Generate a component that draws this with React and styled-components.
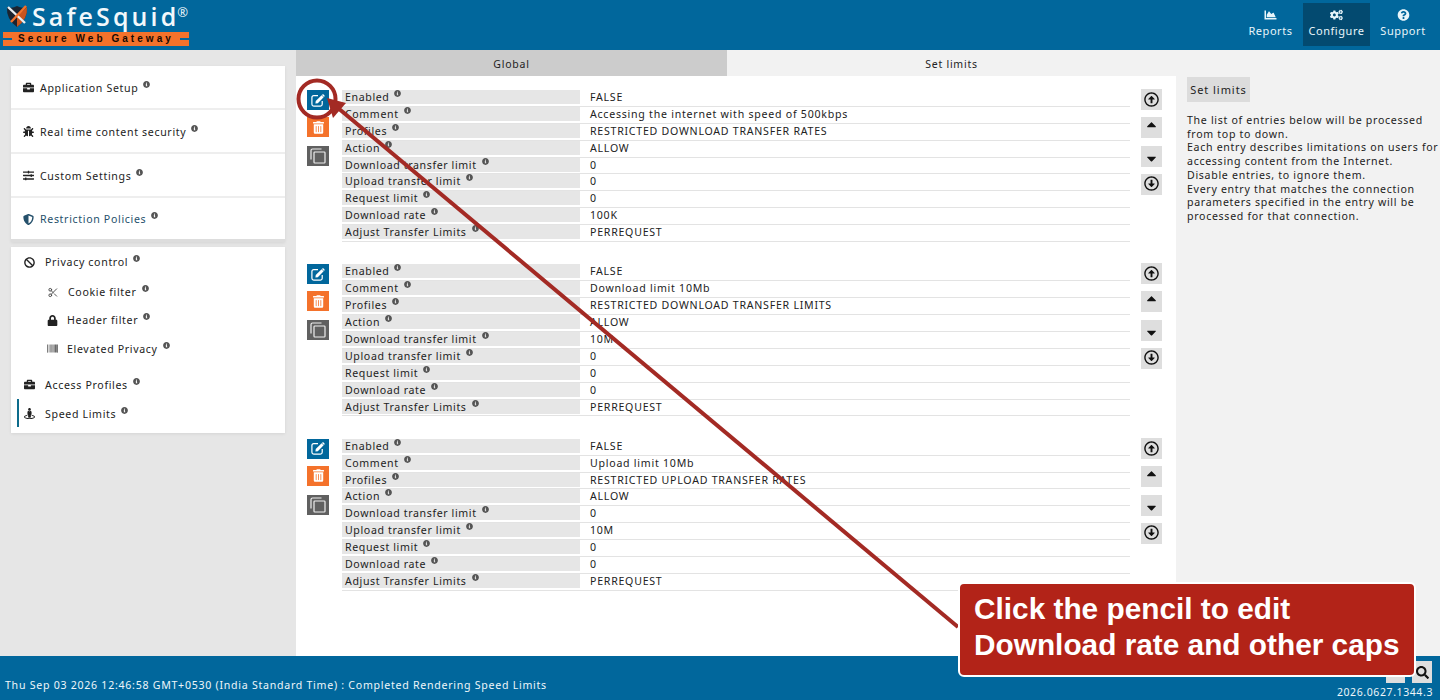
import React from 'react';
import styled, { createGlobalStyle } from 'styled-components';
import {
  FaBriefcase, FaBug, FaSlidersH, FaShieldAlt, FaBan, FaLock, FaBarcode, FaStreetView,
  FaChartArea, FaCogs, FaQuestionCircle, FaInfoCircle, FaTrashAlt,
  FaRegArrowAltCircleUp, FaRegArrowAltCircleDown, FaCaretUp, FaCaretDown, FaSearch,
} from 'react-icons/fa';
import { Scissors } from 'lucide-react';

const Global = createGlobalStyle`
  html, body { margin: 0; padding: 0; background: #e6e6e6; }
  * { box-sizing: border-box; }
  body { font-family: "Noto Sans", "Open Sans", sans-serif; font-size: 10.6px; letter-spacing: 0.66px; color: #222; overflow: hidden; }
`;

const Page = styled.div`
  position: relative; width: 1440px; height: 700px; overflow: hidden;
  display: grid; grid-template-rows: 50px 606px 44px; grid-template-columns: 296px 880px 264px;
`;

const Header = styled.header`
  grid-column: 1 / -1; background: #01679c; display: flex; justify-content: space-between; padding: 0 0 0 3px; color: #fff;
`;
const Logo = styled.div`display: flex; flex-direction: column; width: 186px;`;
const LogoTop = styled.div`
  display: flex; align-items: center; height: 31px; padding: 0 0 0 2px; white-space: nowrap;
  svg { flex: none; }
`;
const LogoName = styled.span`
  font-family: "Open Sans", sans-serif; font-size: 25px; letter-spacing: 3.1px; color: #f2f8fb; line-height: 30px; margin-left: 3px; font-weight: 600;
  sup { font-size: 13px; font-weight: 400; letter-spacing: 0; vertical-align: 9px; line-height: 0; margin-left: -2px; }
`;
const LogoBar = styled.div`
  height: 14px; margin-top: 1px; background: #f4722b; color: #1a0a02; font-family: "Liberation Sans", sans-serif; font-weight: 700; font-size: 10px;
  letter-spacing: 3.05px; line-height: 14px; padding-left: 15px; white-space: nowrap; position: relative; overflow: hidden;
  &::before, &::after { content: ""; position: absolute; top: 6px; height: 2px; width: 9px; background: #01679c; }
  &::before { left: 0; } &::after { right: 0; }
`;
const Nav = styled.nav`display: flex; padding: 3px 4px 0 0; gap: 0;`;
const NavItem = styled.div`
  height: 43px; width: ${p => p.$w}px; display: flex; flex-direction: column; align-items: center; padding: 6px 0 0 ${p => p.$pl || 0}px; font-size: 11px; letter-spacing: 0.55px; color: #e8f5fa; line-height: 16px;
  background: ${p => (p.$active ? '#034a70' : 'transparent')};
  svg { width: 13px; height: 12px; margin-bottom: 2px; }
`;

const Side = styled.aside`background: #e6e6e6; padding: 16px 11px 0; display: flex; flex-direction: column; gap: 5px;`;
const Card = styled.div`background: #fff; width: 274px; box-shadow: 0 1px 3px rgba(0,0,0,.08);`;
const TopItem = styled.div`
  height: 44px; display: flex; align-items: center; padding: 1px 0 0 12px; gap: 6px;
  border-bottom: 2px solid #eee;
  color: ${p => (p.$active ? '#25506b' : '#222')};
  &:last-child { height: 44px; border-bottom: 3px solid #ddd; }
  svg.lead { width: 11px; height: 11px; flex: none; }
`;
const SubCard = styled(Card)`padding: 5px 0 6px; height: 186px; position: relative;`;
const Item = styled.div`
  display: flex; align-items: center; gap: ${p => (p.$sub ? 9 : 10)}px; padding-left: ${p => (p.$sub ? 36 : 13)}px; height: ${p => p.$h}px; margin-top: ${p => p.$mt || 0}px;
  position: relative;
  svg.lead { width: 11px; height: 11px; flex: none; }
`;
const ActiveBar = styled.span`position: absolute; left: 6px; top: 0; bottom: 1px; width: 2px; background: #0d6c8c;`;
const Info = styled(FaInfoCircle)`width: 7px; height: 7px; color: #555; margin-left: 5px; position: relative; top: -4px;`;

const Center = styled.div`display: flex; flex-direction: column; background: #fff;`;
const Tabs = styled.div`display: grid; grid-template-columns: 431px 449px; height: 26px;`;
const Tab = styled.div`
  display: flex; align-items: center; justify-content: center; background: ${p => (p.$on ? '#f2f2f2' : '#cccccc')}; padding-top: 1px; font-size: 10.5px; letter-spacing: 0.75px;
`;
const List = styled.div`padding: 14px 0 0 11px; display: flex; flex-direction: column; gap: 22.4px;`;
const Entry = styled.div`display: flex; height: 152px;`;
const Tools = styled.div`width: 22px; display: flex; flex-direction: column; margin-right: 13px;`;
const ToolButton = styled.button`
  border: 0; padding: 0; width: 22px; height: 20px; margin-bottom: ${p => p.$mb}px; display: flex; align-items: center; justify-content: center;
  background: ${p => p.$bg}; color: #fff;
`;
const Rows = styled.div`width: 788px; display: flex; flex-direction: column;`;
const Row = styled.div`
  display: grid; grid-template-columns: 238px 1fr; height: 16.9px; border-bottom: 1px solid #e3e3e3; line-height: 15px;
`;
const Label = styled.div`background: #e6e6e6; padding-left: 3px; height: 14px; white-space: nowrap; letter-spacing: 0.62px;`;
const Value = styled.div`padding-left: 10px; height: 14px; white-space: nowrap; letter-spacing: 0.75px;`;
const Moves = styled.div`width: 21px; margin-left: 11px; display: flex; flex-direction: column; margin-top: -1px;`;
const Move = styled.button`
  border: 0; padding: 0; width: 21px; height: 21px; margin-bottom: ${p => p.$mb}px; background: #dedede; color: #111; display: flex; align-items: center; justify-content: center;
  svg { width: 15px; height: 15px; position: relative; top: ${p => p.$dy || 0}px; }
`;

const Help = styled.div`background: #f2f2f2; padding: 27px 0 0 11px;`;
const HelpTitle = styled.div`
  width: 63px; height: 25px; background: #dcdcdc; display: flex; align-items: center; justify-content: center; margin-bottom: 12px; font-size: 11px; letter-spacing: 0.95px;
`;
const HelpText = styled.div`line-height: 13.7px; white-space: nowrap; letter-spacing: 0.69px;`;

const Footer = styled.footer`
  grid-column: 1 / -1; background: #01679c; color: #eef6fa; display: flex; justify-content: space-between; padding: 0 7px 0 5px; position: relative;
`;
const Status = styled.div`padding-top: 23px; line-height: 13px; letter-spacing: 0.73px;`;
const FootRight = styled.div`display: flex; flex-direction: column; align-items: flex-end;`;
const FootButtons = styled.div`display: flex; gap: 7px; padding-top: 5px; margin-right: 1px;`;
const FootButton = styled.div`
  width: ${p => p.$w}px; height: 22px; background: #dedede; color: #111; display: flex; align-items: center; justify-content: center;
  svg { width: 13px; height: 13px; }
`;
const Version = styled.div`font-size: 10.5px; line-height: 13px; margin-top: 3px; letter-spacing: 0.6px;`;

const Overlay = styled.svg`position: absolute; left: 0; top: 0; pointer-events: none;`;
const Callout = styled.div`
  position: absolute; left: 958px; top: 582px; width: 458px; height: 95px; background: #b22318; border: 2px solid #fff; border-radius: 6px;
  color: #fff; font-family: "Liberation Sans", Arial, sans-serif; font-weight: 700; font-size: 29.8px; letter-spacing: 0; line-height: 36px; padding: 7px 0 0 14px; white-space: nowrap;
`;

const Tip = ({ children }) => <span>{children}<Info /></span>;

const EditIcon = () => (
  <svg viewBox="0 0 16 16" style={{ width: 16, height: 15 }}>
    <path d="M8 2.8 H3.5 Q1.5 2.8 1.5 4.8 V12 Q1.5 14 3.5 14 H10.5 Q12.5 14 12.5 12 V8.5" fill="none" stroke="#fff" strokeWidth="1.3" />
    <path d="M5.6 8.6 L11.8 2.4 L14 4.6 L7.8 10.8 L5.2 11.2 Z" fill="#fff" />
    <path d="M12.6 1.6 Q13.3 1 14 1.6 L14.8 2.4 Q15.4 3.1 14.8 3.8 L14.4 4.2 L12.2 2 Z" fill="#fff" />
  </svg>
);

const CopyIcon = () => (
  <svg viewBox="0 0 18 18" style={{ width: 18, height: 18 }} fill="none" stroke="#eee" strokeWidth="1.2">
    <path d="M12.5 2 H3.5 Q2 2 2 3.5 V12.5" />
    <rect x="5" y="5" width="11" height="11" rx="0.8" />
  </svg>
);

const entries = [
  ['Accessing the internet with speed of 500kbps', 'RESTRICTED DOWNLOAD TRANSFER RATES', '0', '0', '0', '100K'],
  ['Download limit 10Mb', 'RESTRICTED DOWNLOAD TRANSFER LIMITS', '10M', '0', '0', '0'],
  ['Upload limit 10Mb', 'RESTRICTED UPLOAD TRANSFER RATES', '0', '10M', '0', '0'],
];

const EntryBlock = ({ e }) => {
  const rows = [
    ['Enabled', 'FALSE'], ['Comment', e[0]], ['Profiles', e[1]], ['Action', 'ALLOW'],
    ['Download transfer limit', e[2]], ['Upload transfer limit', e[3]], ['Request limit', e[4]],
    ['Download rate', e[5]], ['Adjust Transfer Limits', 'PERREQUEST'],
  ];
  return (
    <Entry>
      <Tools>
        <ToolButton $bg="#01679c" $mb={7}><EditIcon /></ToolButton>
        <ToolButton $bg="#f4722b" $mb={9}><FaTrashAlt style={{ width: 11, height: 13 }} /></ToolButton>
        <ToolButton $bg="#606060" $mb={0}><CopyIcon /></ToolButton>
      </Tools>
      <Rows>
        {rows.map(([l, v]) => (
          <Row key={l}><Label><Tip>{l}</Tip></Label><Value>{v}</Value></Row>
        ))}
      </Rows>
      <Moves>
        <Move $mb={7}><FaRegArrowAltCircleUp /></Move>
        <Move $mb={8} $dy={-3}><FaCaretUp /></Move>
        <Move $mb={7} $dy={2}><FaCaretDown /></Move>
        <Move $mb={0} $dy={-1}><FaRegArrowAltCircleDown /></Move>
      </Moves>
    </Entry>
  );
};

export default function App() {
  return (
    <Page>
      <Global />
      <Header>
        <Logo>
          <LogoTop>
            <svg width="24" height="24" viewBox="0 0 24 24">
              <path d="M2 3 Q7 5 12 2 Q17 5 22 3 Q23 15 12 23 Q1 15 2 3Z" fill="#1c2430" />
              <path d="M12 12 L22 3 Q23 15 12 23Z" fill="#c8551f" />
              <path d="M3 3 L20 19" stroke="#e8edf0" strokeWidth="2.4" />
              <path d="M21 2 L6 18" stroke="#f4722b" strokeWidth="2.4" />
            </svg>
            <LogoName>SafeSquid<sup>®</sup></LogoName>
          </LogoTop>
          <LogoBar>Secure Web Gateway</LogoBar>
        </Logo>
        <Nav>
          <NavItem $w={68} $pl={3}><FaChartArea />Reports</NavItem>
          <NavItem $w={67} $active><FaCogs />Configure</NavItem>
          <NavItem $w={66}><FaQuestionCircle />Support</NavItem>
        </Nav>
      </Header>

      <Side>
        <Card>
          <TopItem><FaBriefcase className="lead" /><Tip>Application Setup</Tip></TopItem>
          <TopItem><FaBug className="lead" /><Tip>Real time content security</Tip></TopItem>
          <TopItem><FaSlidersH className="lead" /><Tip>Custom Settings</Tip></TopItem>
          <TopItem $active><FaShieldAlt className="lead" /><Tip>Restriction Policies</Tip></TopItem>
        </Card>
        <SubCard>
          <Item $h={20}><FaBan className="lead" /><Tip>Privacy control</Tip></Item>
          <Item $sub $h={28} $mt={6}><Scissors className="lead" color="#444" strokeWidth={2} style={{ width: 12 }} /><Tip>Cookie filter</Tip></Item>
          <Item $sub $h={28}><FaLock className="lead" /><Tip>Header filter</Tip></Item>
          <Item $sub $h={29}><FaBarcode className="lead" /><Tip>Elevated Privacy</Tip></Item>
          <Item $h={29} $mt={7}><FaBriefcase className="lead" /><Tip>Access Profiles</Tip></Item>
          <Item $h={29}><ActiveBar /><FaStreetView className="lead" /><Tip>Speed Limits</Tip></Item>
        </SubCard>
      </Side>

      <Center>
        <Tabs>
          <Tab>Global</Tab>
          <Tab $on>Set limits</Tab>
        </Tabs>
        <List>
          {entries.map((e, i) => <EntryBlock key={i} e={e} />)}
        </List>
      </Center>

      <Help>
        <HelpTitle>Set limits</HelpTitle>
        <HelpText>
          The list of entries below will be processed<br />
          from top to down.<br />
          Each entry describes limitations on users for<br />
          accessing content from the Internet.<br />
          Disable entries, to ignore them.<br />
          Every entry that matches the connection<br />
          parameters specified in the entry will be<br />
          processed for that connection.
        </HelpText>
      </Help>

      <Footer>
        <Status>Thu Sep 03 2026 12:46:58 GMT+0530 (India Standard Time) : Completed Rendering Speed Limits</Status>
        <FootRight>
          <FootButtons>
            <FootButton $w={19} />
            <FootButton $w={20}><FaSearch /></FootButton>
          </FootButtons>
          <Version>2026.0627.1344.3</Version>
        </FootRight>
      </Footer>

      <Overlay width="1440" height="700" viewBox="0 0 1440 700">
        <circle cx="317" cy="99" r="18.5" fill="none" stroke="#a32a24" strokeWidth="4" />
        <path d="M958 627 L338 108" stroke="#a32a24" strokeWidth="4" fill="none" />
        <path d="M327 98 L346 103 L333 118 Z" fill="#a32a24" />
      </Overlay>
      <Callout>Click the pencil to edit<br />Download rate and other caps</Callout>
    </Page>
  );
}
